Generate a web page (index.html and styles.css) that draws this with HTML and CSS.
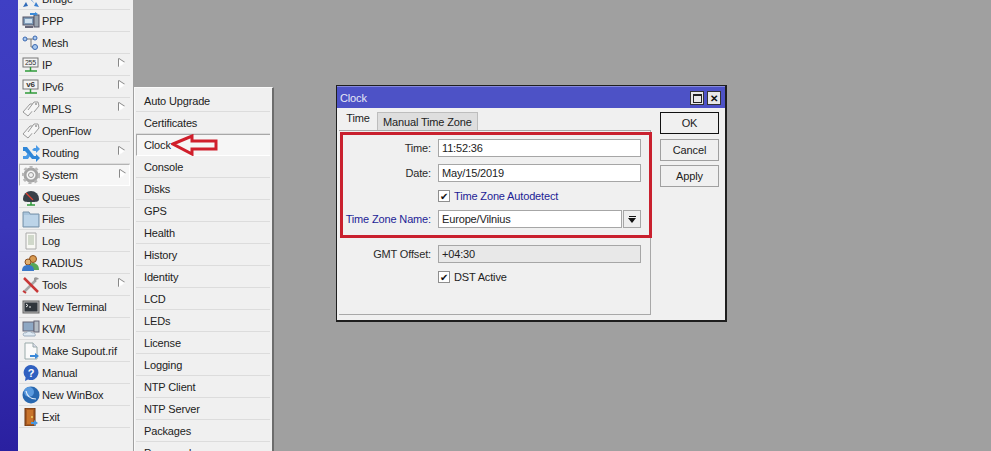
FILE: index.html
```html
<!DOCTYPE html>
<html lang="en">
<head>
    <meta charset="UTF-8">
    <title>WinBox - Clock</title>
    <link rel="stylesheet" href="styles.css">
</head>
<body>
    <svg class="icon-defs" width="0" height="0">
        <defs>
            <symbol id="i-bridge" viewBox="0 0 18 18">
                <path d="M1 1l5 1-1 2 8 10 1-2 3 5-5-1 1-2L5 6 4 8z" fill="#3a7fd0"/>
                <path d="M17 1l-5 1 1 2L5 14l-1-2-3 5 5-1-1-2 8-10 1 2z" fill="#2f6ab8"/>
            </symbol>
            <symbol id="i-ppp" viewBox="0 0 18 18">
                <rect x="1" y="5" width="11" height="8" fill="#7f9cb8" stroke="#556"/>
                <rect x="3" y="7" width="7" height="4" fill="#cfe0ee"/>
                <rect x="12" y="3" width="5" height="12" fill="#9aa4ae" stroke="#556"/>
                <path d="M8 1h5V0l3 2-3 2V3H8z" fill="#3b8ad8"/>
                <rect x="3" y="14" width="8" height="2" fill="#667"/>
            </symbol>
            <symbol id="i-mesh" viewBox="0 0 18 18">
                <path d="M3 5h6M9 5h3M9 5v8h3" fill="none" stroke="#777"/>
                <circle cx="3" cy="5" r="2" fill="#a8c8ee" stroke="#3a68b0"/>
                <circle cx="13" cy="4" r="2" fill="#a8c8ee" stroke="#3a68b0"/>
                <circle cx="13" cy="13" r="2.5" fill="#a8c8ee" stroke="#3a68b0"/>
            </symbol>
            <symbol id="i-ip" viewBox="0 0 18 18">
                <rect x="1" y="2" width="15" height="9" fill="#f4f4f4" stroke="#777"/>
                <text x="8.500" y="9" font-size="7" font-family="Liberation Sans" fill="#333" text-anchor="middle">255</text>
                <path d="M8.500 11v4M3 15h12" stroke="#2f9a3a" stroke-width="1.500"/>
            </symbol>
            <symbol id="i-v6" viewBox="0 0 18 18">
                <rect x="1" y="2" width="15" height="9" fill="#f4f4f4" stroke="#777"/>
                <text x="8.500" y="9" font-size="8" font-weight="bold" font-family="Liberation Sans" fill="#333" text-anchor="middle">v6</text>
                <path d="M8.500 11v4M3 15h12" stroke="#2f9a3a" stroke-width="1.500"/>
            </symbol>
            <symbol id="i-tag" viewBox="0 0 18 18">
                <path d="M1 12l7-8h4l1 4-7 8z" fill="#f6f6f6" stroke="#999"/>
                <path d="M6 10l6-8h4l1 4-5 6" fill="#f6f6f6" stroke="#999"/>
                <circle cx="14" cy="4" r="1" fill="#999"/>
            </symbol>
            <symbol id="i-routing" viewBox="0 0 18 18">
                <path d="M1 3h4l7 9h2v-2l4 4-4 4v-3h-4L3 7H1z" fill="#2f86d8"/>
                <path d="M1 12h3l2-3 2 3-2 3H1zM10 6l2-2h2V1l4 4-4 4V7h-2z" fill="#4a9ae6"/>
            </symbol>
            <symbol id="i-system" viewBox="0 0 18 18">
                <circle cx="9" cy="9" r="6" fill="none" stroke="#a4a4a4" stroke-width="3"/>
                <circle cx="9" cy="9" r="8" fill="none" stroke="#b8b8b8" stroke-width="2.500" stroke-dasharray="3 3"/>
                <circle cx="9" cy="9" r="2.500" fill="#f0f0f0" stroke="#999"/>
            </symbol>
            <symbol id="i-queues" viewBox="0 0 18 18">
                <path d="M1 11a8 8 0 0 1 16 0c0 3-3 3-8 3s-8 0-8-3z" fill="#384048"/>
                <path d="M4 5l7 7" stroke="#e04030" stroke-width="1.200"/>
                <path d="M9 14v3M5 17h8" stroke="#2f9a3a" stroke-width="1.500"/>
            </symbol>
            <symbol id="i-files" viewBox="0 0 18 18">
                <path d="M1 4V2h6l1 2h9v13H1z" fill="#a8c4dc" stroke="#7a94aa"/>
                <rect x="2" y="5" width="14" height="11" fill="#bcd4e8"/>
            </symbol>
            <symbol id="i-log" viewBox="0 0 18 18">
                <path d="M4 1h10v16H4z" fill="#f8f8f4" stroke="#aaa"/>
                <path d="M6 4h6M6 6h6M6 8h6M6 10h6M6 12h6" stroke="#a8b8a0"/>
            </symbol>
            <symbol id="i-radius" viewBox="0 0 18 18">
                <circle cx="11" cy="5" r="3.500" fill="#d89a50" stroke="#8a5020"/>
                <path d="M6 16c0-5 2-7 5-7s6 2 6 7z" fill="#58a858"/>
                <circle cx="6" cy="8" r="3" fill="#e0b070" stroke="#8a5020"/>
                <path d="M0 17c0-4 2-6 6-6s6 2 6 6z" fill="#3a78c8"/>
            </symbol>
            <symbol id="i-tools" viewBox="0 0 18 18">
                <path d="M2 16L14 4" stroke="#a8a8a8" stroke-width="2.500"/>
                <path d="M12 2a3.500 3.500 0 0 1 5 1l-3 1 0 2-2-1z" fill="#999"/>
                <path d="M2 2l14 14" stroke="#c83838" stroke-width="2.500"/>
                <path d="M1 15l3 2" stroke="#c83838" stroke-width="2"/>
            </symbol>
            <symbol id="i-terminal" viewBox="0 0 18 18">
                <rect x="1" y="3" width="16" height="12" fill="#b8b8b8" stroke="#666"/>
                <rect x="2.500" y="4.500" width="13" height="9" fill="#30363c"/>
                <path d="M4 6l2 1.500L4 9M7 9h2" stroke="#eee" fill="none"/>
            </symbol>
            <symbol id="i-kvm" viewBox="0 0 18 18">
                <rect x="1" y="2" width="11" height="9" fill="#8ea8c4" stroke="#667"/>
                <rect x="12" y="1" width="5" height="11" fill="#b4bcc4" stroke="#667"/>
                <path d="M2 16c-2-2 0-4 2-3 1-2 5-2 6 0 2-1 4 1 3 3z" fill="#dfeaf4" stroke="#9ab"/>
            </symbol>
            <symbol id="i-supout" viewBox="0 0 18 18">
                <path d="M3 1h8l4 4v12H3z" fill="#fafafa" stroke="#9aa"/>
                <path d="M11 1v4h4" fill="#dde" stroke="#9aa"/>
                <path d="M8 13h5v-2l4 3-4 3v-2H8z" fill="#3a88d8"/>
            </symbol>
            <symbol id="i-manual" viewBox="0 0 18 18">
                <path d="M9 1a7.500 7.500 0 1 1-3 14.400L3 17l.6-3.500A7.500 7.500 0 0 1 9 1z" fill="#3060c0"/>
                <text x="9" y="13" font-size="11" font-weight="bold" font-family="Liberation Sans" fill="#fff" text-anchor="middle">?</text>
            </symbol>
            <symbol id="i-winbox" viewBox="0 0 18 18">
                <circle cx="9" cy="9" r="8.500" fill="#2868b0"/>
                <circle cx="7" cy="6" r="5" fill="#5a9ade"/>
                <path d="M4 5c1 5 4 8 10 8" fill="none" stroke="#e6f0fa" stroke-width="1.200"/>
            </symbol>
            <symbol id="i-exit" viewBox="0 0 18 18">
                <rect x="3" y="0" width="10" height="18" fill="#a85a20" stroke="#6a3410"/>
                <rect x="5" y="2" width="6" height="14" fill="#c8742c"/>
                <circle cx="10" cy="9" r="1" fill="#f0d060"/>
                <path d="M9 14h3v-2l4 3-4 3v-2H9z" fill="#4a98e0"/>
            </symbol>
        </defs>
    </svg>

    <div class="screen">
        <div class="brand-strip"></div>

        <div class="main-menu">
            <div class="menu-row"><svg class="menu-icon"><use href="#i-bridge"/></svg><span>Bridge</span></div>
            <div class="menu-row"><svg class="menu-icon"><use href="#i-ppp"/></svg><span>PPP</span></div>
            <div class="menu-row"><svg class="menu-icon"><use href="#i-mesh"/></svg><span>Mesh</span></div>
            <div class="menu-row has-more"><svg class="menu-icon"><use href="#i-ip"/></svg><span>IP</span></div>
            <div class="menu-row has-more"><svg class="menu-icon"><use href="#i-v6"/></svg><span>IPv6</span></div>
            <div class="menu-row has-more"><svg class="menu-icon"><use href="#i-tag"/></svg><span>MPLS</span></div>
            <div class="menu-row"><svg class="menu-icon"><use href="#i-tag"/></svg><span>OpenFlow</span></div>
            <div class="menu-row has-more"><svg class="menu-icon"><use href="#i-routing"/></svg><span>Routing</span></div>
            <div class="menu-row has-more is-open"><svg class="menu-icon"><use href="#i-system"/></svg><span>System</span></div>
            <div class="menu-row"><svg class="menu-icon"><use href="#i-queues"/></svg><span>Queues</span></div>
            <div class="menu-row"><svg class="menu-icon"><use href="#i-files"/></svg><span>Files</span></div>
            <div class="menu-row"><svg class="menu-icon"><use href="#i-log"/></svg><span>Log</span></div>
            <div class="menu-row"><svg class="menu-icon"><use href="#i-radius"/></svg><span>RADIUS</span></div>
            <div class="menu-row has-more"><svg class="menu-icon"><use href="#i-tools"/></svg><span>Tools</span></div>
            <div class="menu-row"><svg class="menu-icon"><use href="#i-terminal"/></svg><span>New Terminal</span></div>
            <div class="menu-row"><svg class="menu-icon"><use href="#i-kvm"/></svg><span>KVM</span></div>
            <div class="menu-row"><svg class="menu-icon"><use href="#i-supout"/></svg><span>Make Supout.rif</span></div>
            <div class="menu-row"><svg class="menu-icon"><use href="#i-manual"/></svg><span>Manual</span></div>
            <div class="menu-row"><svg class="menu-icon"><use href="#i-winbox"/></svg><span>New WinBox</span></div>
            <div class="menu-row"><svg class="menu-icon"><use href="#i-exit"/></svg><span>Exit</span></div>
        </div>

        <div class="desktop">
            <div class="sub-menu">
                <div class="sub-row">Auto Upgrade</div>
                <div class="sub-row">Certificates</div>
                <div class="sub-row is-open">Clock</div>
                <div class="sub-row">Console</div>
                <div class="sub-row">Disks</div>
                <div class="sub-row">GPS</div>
                <div class="sub-row">Health</div>
                <div class="sub-row">History</div>
                <div class="sub-row">Identity</div>
                <div class="sub-row">LCD</div>
                <div class="sub-row">LEDs</div>
                <div class="sub-row">License</div>
                <div class="sub-row">Logging</div>
                <div class="sub-row">NTP Client</div>
                <div class="sub-row">NTP Server</div>
                <div class="sub-row">Packages</div>
                <div class="sub-row">Password</div>
            </div>

            <svg class="clock-arrow" width="48" height="22" viewBox="0 0 48 22">
                <path d="M2 10L21 2v5h24v8H21v5z" fill="none" stroke="#d01f2c" stroke-width="3"/>
            </svg>

            <div class="window">
                <div class="title-bar">
                    <span class="title-text">Clock</span>
                    <div class="title-buttons">
                        <div class="title-btn"><span class="max-glyph"></span></div>
                        <div class="title-btn close-glyph">✕</div>
                    </div>
                </div>
                <div class="window-body">
                    <div class="tabs-area">
                        <div class="tabs">
                            <div class="tab active">Time</div>
                            <div class="tab">Manual Time Zone</div>
                        </div>
                        <div class="tab-panel">
                            <div class="form-grid">
                                <label class="field-label">Time:</label>
                                <div class="field">11:52:36</div>

                                <label class="field-label">Date:</label>
                                <div class="field">May/15/2019</div>

                                <div class="check-row">
                                    <span class="check-box">✔</span>
                                    <span class="link-text">Time Zone Autodetect</span>
                                </div>

                                <label class="field-label link-text">Time Zone Name:</label>
                                <div class="field-with-btn">
                                    <div class="field">Europe/Vilnius</div>
                                    <div class="drop-btn"><span class="drop-bar"></span><span class="drop-tri"></span></div>
                                </div>

                                <label class="field-label gmt-gap">GMT Offset:</label>
                                <div class="field read-only gmt-gap">+04:30</div>

                                <div class="check-row">
                                    <span class="check-box">✔</span>
                                    <span>DST Active</span>
                                </div>
                            </div>
                        </div>
                    </div>
                    <div class="side-buttons">
                        <div class="dlg-btn default">OK</div>
                        <div class="dlg-btn">Cancel</div>
                        <div class="dlg-btn">Apply</div>
                    </div>
                </div>
                <div class="red-frame"></div>
            </div>
        </div>
    </div>
</body>
</html>
```

FILE: styles.css
```css
* {
    margin: 0;
    padding: 0;
    box-sizing: border-box;
}

body {
    font-family: 'Liberation Sans', Arial, sans-serif;
    font-size: 11px;
    letter-spacing: -0.15px;
    color: #222;
    background: #a0a0a0;
    overflow: hidden;
}

.icon-defs {
    position: absolute;
}

.screen {
    display: flex;
    height: 451px;
    overflow: hidden;
}

.brand-strip {
    width: 18px;
    flex: none;
    background: linear-gradient(180deg, #3f3fc4 0%, #3a36b8 50%, #2a20a0 100%);
}

.main-menu {
    width: 115px;
    flex: none;
    height: 480px;
    margin-top: -12px;
    padding-left: 1px;
    background: #f0f0f0;
}

.menu-row {
    position: relative;
    display: flex;
    align-items: center;
    gap: 2px;
    height: 22px;
    padding-left: 3px;
    margin-right: 3px;
    border-bottom: 1px solid #dcdcdc;
}

.menu-row.is-open {
    background: #f6f6f6;
    border: 1px solid #b4b4b4;
    border-right-color: #fff;
    border-bottom-color: #fff;
    padding-left: 2px;
}

.menu-icon {
    width: 18px;
    height: 18px;
    flex: none;
}

.has-more::after {
    content: '';
    position: absolute;
    left: 100px;
    top: 5px;
    width: 0;
    height: 0;
    border-left: 6px solid #fff;
    border-top: 4px solid transparent;
    border-bottom: 4px solid transparent;
    filter: drop-shadow(-1px 0 0 #888) drop-shadow(0 -0.5px 0 #888);
}

.desktop {
    position: relative;
    flex: 1;
}

.sub-menu {
    position: absolute;
    left: 1px;
    top: 87px;
    width: 140px;
    height: 380px;
    padding: 2px 2px 0 1px;
    background: #f0f0f0;
    border-left: 1px solid #fafafa;
    border-top: 1px solid #fafafa;
    border-right: 2px solid #6c6c6c;
}

.sub-row {
    display: flex;
    align-items: center;
    height: 22px;
    padding-left: 8px;
    border-bottom: 1px solid #dcdcdc;
}

.sub-row.is-open {
    background: #f6f6f6;
    border: 1px solid #a8a8a8;
    border-right: 0;
    border-bottom-color: #fff;
    padding-left: 7px;
}

.clock-arrow {
    position: absolute;
    left: 38px;
    top: 134px;
}

.window {
    position: absolute;
    left: 203px;
    top: 85px;
    width: 391px;
    height: 237px;
    background: #f0f0f0;
    border: 2px solid #1e1e1e;
    border-top-width: 1px;
    border-left-width: 1px;
}

.title-bar {
    display: flex;
    align-items: center;
    justify-content: space-between;
    height: 22px;
    padding: 1px 4px 0 3px;
    background: #4d52c6;
    border-top: 1px solid #8488dc;
}

.title-text {
    color: #e6e7f5;
}

.title-buttons {
    display: flex;
    gap: 3px;
}

.title-btn {
    display: flex;
    align-items: center;
    justify-content: center;
    width: 14px;
    height: 14px;
    background: #e8e8e8;
    border: 1px solid #333;
    font-size: 10px;
    font-weight: bold;
    color: #111;
}

.max-glyph {
    width: 9px;
    height: 9px;
    border: 1px solid #222;
    border-top-width: 2px;
}

.window-body {
    display: flex;
    align-items: flex-start;
    padding-left: 2px;
}

.tabs-area {
    width: 312px;
}

.tabs {
    display: flex;
    align-items: flex-end;
    height: 22px;
}

.tab {
    display: flex;
    align-items: center;
    height: 18px;
    padding: 0 5px;
    background: #dedede;
    border: 1px solid #bdbdbd;
    border-bottom: 0;
    white-space: nowrap;
}

.tab.active {
    width: 38px;
    height: 22px;
    justify-content: center;
    padding: 0 0 2px;
    background: #f0f0f0;
    border: 0;
}

.tab-panel {
    height: 185px;
    padding: 8px 9px 0 0;
    border-top: 1px solid #a8a8a8;
    border-right: 1px solid #a8a8a8;
    border-bottom: 1px solid #a8a8a8;
}

.form-grid {
    display: grid;
    grid-template-columns: 92px 1fr;
    column-gap: 7px;
    row-gap: 7px;
    align-items: center;
}

.field-label {
    text-align: right;
    white-space: nowrap;
    color: #2a2a2a;
}

.field-label.link-text,
.link-text {
    color: #1d1d96;
}

.field {
    display: flex;
    align-items: center;
    height: 18px;
    padding-left: 3px;
    background: #fff;
    border: 1px solid #a6a6a6;
}

.field.read-only {
    background: #e8e8e8;
}

.field-with-btn {
    display: flex;
    gap: 1px;
}

.field-with-btn .field {
    flex: 1;
}

.drop-btn {
    display: flex;
    flex-direction: column;
    align-items: center;
    justify-content: center;
    gap: 1px;
    width: 18px;
    height: 18px;
    background: #eee;
    border: 1px solid #a6a6a6;
}

.drop-bar {
    width: 7px;
    height: 1px;
    background: #111;
}

.drop-tri {
    width: 0;
    height: 0;
    border-top: 5px solid #111;
    border-left: 4px solid transparent;
    border-right: 4px solid transparent;
}

.check-row {
    grid-column: 2;
    display: flex;
    align-items: center;
    gap: 4px;
    height: 12px;
    margin: 1px 0;
}

.check-box {
    display: flex;
    align-items: center;
    justify-content: center;
    width: 12px;
    height: 12px;
    background: #fff;
    border: 1px solid #8e8e8e;
    font-size: 10px;
    color: #111;
}

.gmt-gap {
    margin-top: 10px;
}

.side-buttons {
    display: flex;
    flex-direction: column;
    gap: 4px;
    margin: 4px 0 0 9px;
}

.dlg-btn {
    display: flex;
    align-items: center;
    justify-content: center;
    width: 59px;
    height: 22px;
    background: #f0f0f0;
    border: 1px solid #a0a0a0;
}

.dlg-btn.default {
    margin-bottom: 1px;
    border-color: #111;
}

.red-frame {
    position: absolute;
    left: 3px;
    top: 46px;
    width: 312px;
    height: 106px;
    border: 3px solid #c9202e;
    pointer-events: none;
}
```
